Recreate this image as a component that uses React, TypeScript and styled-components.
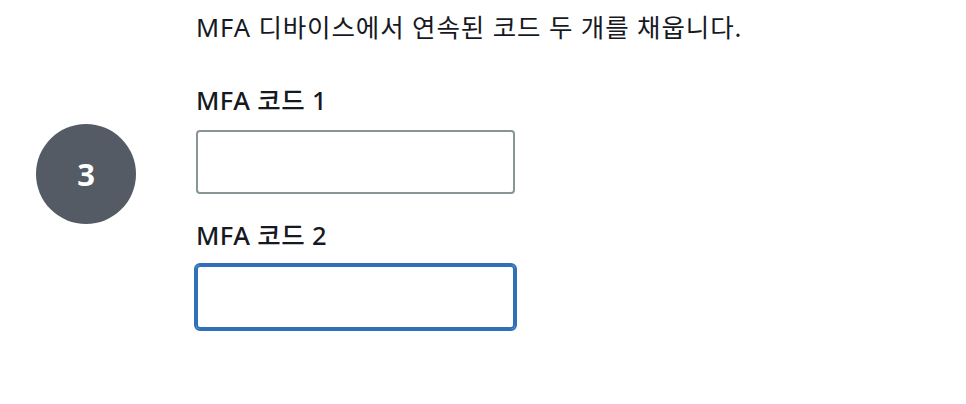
import styled, { createGlobalStyle } from "styled-components";

const GlobalStyle = createGlobalStyle`
  html, body {
    margin: 0;
    padding: 0;
    background: #ffffff;
  }
  body {
    font-family: "Noto Sans", "Noto Sans CJK KR", sans-serif;
    color: #16191f;
  }
`;

const StepRow = styled.div`
  display: flex;
  align-items: flex-start;
  gap: 60px;
  padding: 10px 0 0 36px;
  height: 404px;
  box-sizing: border-box;
`;

const StepBadge = styled.div`
  flex: none;
  width: 100px;
  height: 100px;
  margin-top: 114px;
  border-radius: 50%;
  background: #545b64;
  color: #ffffff;
  display: flex;
  align-items: center;
  justify-content: center;
  font-size: 31px;
  font-weight: 700;
`;

const StepBody = styled.div`
  display: flex;
  flex-direction: column;
`;

const Instruction = styled.p`
  margin: 0 0 38px;
  font-size: 25.5px;
  line-height: 35px;
  letter-spacing: 0.9px;
`;

const Field = styled.div`
  display: flex;
  flex-direction: column;
  gap: 12px;
  & + & {
    margin-top: 24px;
  }
`;

const Label = styled.label`
  font-size: 25.5px;
  line-height: 35px;
  font-weight: 500;
  letter-spacing: 0.4px;
`;

const CodeInput = styled.input<{ $focused?: boolean }>`
  width: 319px;
  height: 64px;
  box-sizing: border-box;
  border: 2px solid ${(p) => (p.$focused ? "#3070b8" : "#879596")};
  border-radius: 4px;
  outline: ${(p) => (p.$focused ? "2px solid #3070b8" : "none")};
  outline-offset: 0;
  padding: 0 16px;
  font-size: 24px;
  font-family: inherit;
  background: #ffffff;
`;

export default function App() {
  return (
    <>
      <GlobalStyle />
      <StepRow>
        <StepBadge>3</StepBadge>
        <StepBody>
          <Instruction>MFA 디바이스에서 연속된 코드 두 개를 채웁니다.</Instruction>
          <Field>
            <Label htmlFor="mfa1">MFA 코드 1</Label>
            <CodeInput id="mfa1" type="text" />
          </Field>
          <Field>
            <Label htmlFor="mfa2">MFA 코드 2</Label>
            <CodeInput id="mfa2" type="text" $focused />
          </Field>
        </StepBody>
      </StepRow>
    </>
  );
}
